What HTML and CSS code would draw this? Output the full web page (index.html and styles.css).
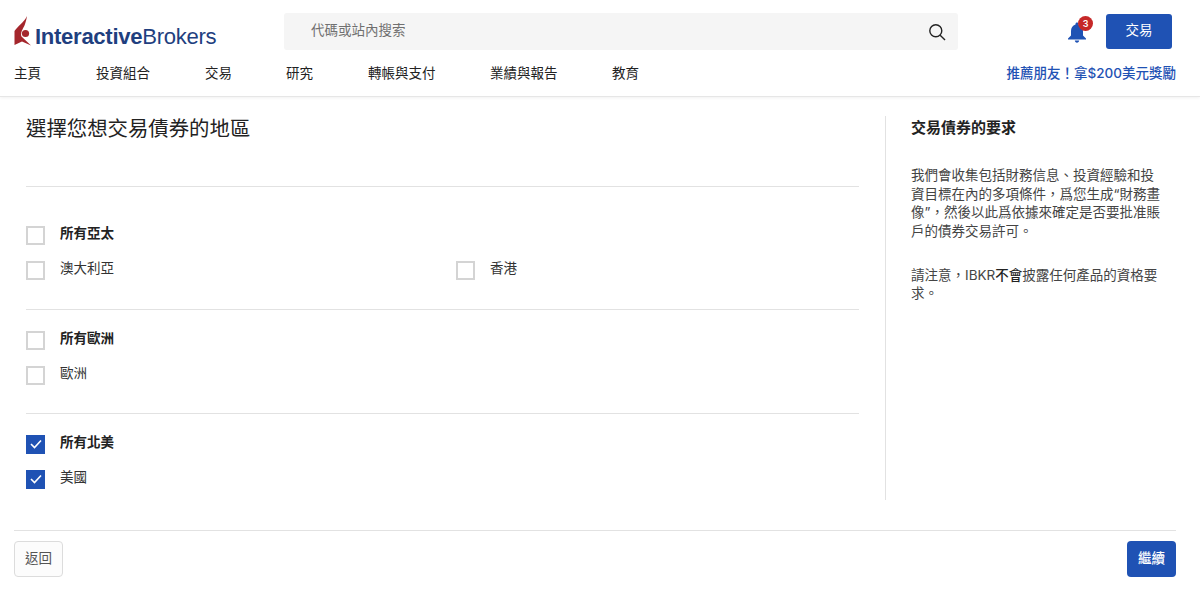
FILE: index.html
```html
<!DOCTYPE html>
<html lang="zh-Hant">
<head>
<meta charset="utf-8">
<title>選擇您想交易債券的地區</title>
<link rel="stylesheet" href="styles.css">
</head>
<body>
<header class="header">
  <div class="top-row">
    <a class="logo">
      <svg class="logo-mark" width="18" height="30" viewBox="0 0 18 30"><path fill="#a4262c" d="M13 0 C11 5 3 11 .5 15 V29 L8 25.500 L17 29.500 L7.500 20.500 C6 17 9 12.500 10.500 9.500 C11.800 6 12.600 3 13 0Z"/><circle cx="11.500" cy="17.500" r="3.600" fill="#a4262c"/></svg>
      <span class="logo-text"><b>Interactive</b>Brokers</span>
    </a>
    <div class="search"><span class="search-ph">代碼或站內搜索</span>
      <svg class="search-icon" width="18" height="18" viewBox="0 0 18 18" fill="none" stroke="#222" stroke-width="1.400"><circle cx="7.800" cy="7.800" r="6"/><path d="M12.200 12.200 L17 17"/></svg>
    </div>
    <div class="top-actions">
      <div class="bell">
        <svg width="20" height="22" viewBox="0 0 20 22"><path fill="#1f52b4" d="M10 1.500c-.9 0-1.500.6-1.500 1.500v.6C5.500 4.400 4 7 4 10v4.500L1 17.500v1h18v-1l-3-3V10c0-3-1.500-5.600-4.500-6.400V3c0-.9-.6-1.500-1.500-1.500zM7.800 19.500c0 1.200 1 2.200 2.200 2.200s2.200-1 2.200-2.200z"/></svg>
        <span class="badge">3</span>
      </div>
      <a class="btn btn-primary btn-trade">交易</a>
    </div>
  </div>
  <nav class="nav">
    <a class="nav-item w1">主頁</a>
    <a class="nav-item w2">投資組合</a>
    <a class="nav-item w3">交易</a>
    <a class="nav-item w4">研究</a>
    <a class="nav-item w5">轉帳與支付</a>
    <a class="nav-item w6">業績與報告</a>
    <a class="nav-item">教育</a>
    <a class="refer">推薦朋友！拿$200美元獎勵</a>
  </nav>
</header>
<main class="main">
  <section class="content">
    <h1 class="title">選擇您想交易債券的地區</h1>
    <div class="group first">
      <label class="row head"><span class="box"></span>所有亞太</label>
      <div class="two">
        <label class="row"><span class="box"></span>澳大利亞</label>
        <label class="row"><span class="box"></span>香港</label>
      </div>
    </div>
    <div class="group">
      <label class="row head"><span class="box"></span>所有歐洲</label>
      <label class="row"><span class="box"></span>歐洲</label>
    </div>
    <div class="group">
      <label class="row head"><span class="box on"><svg width="12" height="10" viewBox="0 0 12 10" fill="none" stroke="#fff" stroke-width="1.600"><path d="M1 5 L4.500 8.500 L11 1.500"/></svg></span>所有北美</label>
      <label class="row"><span class="box on"><svg width="12" height="10" viewBox="0 0 12 10" fill="none" stroke="#fff" stroke-width="1.600"><path d="M1 5 L4.500 8.500 L11 1.500"/></svg></span>美國</label>
    </div>
  </section>
  <aside class="side">
    <h2 class="side-title">交易債券的要求</h2>
    <p class="side-p">我們會收集包括財務信息、投資經驗和投資目標在內的多項條件，爲您生成“財務畫像”，然後以此爲依據來確定是否要批准賬戶的債券交易許可。</p>
    <p class="side-p">請注意，IBKR<b class="strong">不會</b>披露任何產品的資格要求。</p>
  </aside>
</main>
<footer class="footer">
  <a class="btn btn-back">返回</a>
  <a class="btn btn-primary btn-next">繼續</a>
</footer>
</body>
</html>
```
FILE: styles.css
```css
* { box-sizing: border-box; }
html, body { margin: 0; padding: 0; }
body {
  width: 1200px;
  height: 593px;
  overflow: hidden;
  background: #fff;
  color: #222;
  font-family: Inter, "Noto Sans CJK TC", "Noto Sans", sans-serif;
  font-size: 13.5px;
}
.header {
  height: 97px;
  padding: 13px 24px 0 14px;
  border-bottom: 1px solid #e6e6e6;
  box-shadow: 0 1px 3px rgba(0,0,0,.06);
}
.top-row { display: flex; align-items: center; height: 37px; }
.logo { display: flex; align-items: flex-start; width: 270px; height: 37px; padding-top: 3px; }
.logo-mark { display: block; margin-right: 3px; flex: none; }
.logo-text {
  font-family: "Liberation Sans", Arial, sans-serif;
  font-size: 22.100px;
  line-height: 26px;
  color: #1f3f7f;
  letter-spacing: -.3px;
  margin-top: 8px;
}
.logo-text b { font-weight: 700; }
.search {
  width: 674px;
  height: 37px;
  background: #f5f5f5;
  border-radius: 3px;
  display: flex;
  align-items: center;
  justify-content: space-between;
  padding: 0 12px 0 27px;
}
.search-ph { color: #707070; font-size: 13.5px; line-height: 20px; margin-top: -3px; }
.top-actions { display: flex; align-items: center; margin-left: auto; margin-right: 4px; }
.bell { position: relative; width: 20px; height: 22px; margin-right: 19px; }
.bell svg { display: block; }
.badge {
  position: absolute;
  top: -5px;
  left: 11px;
  width: 15px;
  height: 15px;
  border-radius: 50%;
  background: #c62828;
  color: #fff;
  font-size: 9px;
  font-weight: 600;
  line-height: 15px;
  text-align: center;
}
.btn {
  display: flex;
  align-items: center;
  justify-content: center;
  border-radius: 3px;
  font-size: 13.5px;
  line-height: 20px;
  padding-bottom: 3px;
}
.btn-primary { background: #1f52b4; color: #fff; }
.btn-trade { width: 66px; height: 35px; }
.nav { display: flex; align-items: center; height: 20px; margin-top: 13px; }
.nav-item { font-size: 13.5px; color: #222; line-height: 20px; }
.w1 { width: 82px; }
.w2 { width: 109px; }
.w3 { width: 81px; }
.w4 { width: 82px; }
.w5 { width: 122px; }
.w6 { width: 122px; }
.refer { margin-left: auto; color: #1f52b4; font-size: 13.5px; font-weight: 500; line-height: 20px; }
.main {
  display: flex;
  height: 414px;
  margin-top: 19px;
  padding: 0 14px 0 26px;
}
.content { width: 833px; }
.title {
  margin: 0 0 18px;
  height: 52px;
  font-size: 20.400px;
  line-height: 26px;
  font-weight: 400;
  color: #222;
}
.group { border-top: 1px solid #e2e2e2; padding: 18px 0 8px; height: 104px; }
.group.first { height: 123px; padding-top: 36px; }
.row { display: flex; align-items: center; height: 20px; color: #333; font-size: 13.5px; line-height: 20px; }
.row + .row, .group > .two { margin-top: 15px; }
.head { font-weight: 600; color: #222; }
.two { display: grid; grid-template-columns: 430px 1fr; }
.two .row { margin-top: 0; }
.box {
  width: 19px;
  height: 19px;
  border: 2px solid #d4d4d4;
  margin-right: 15px;
  margin-top: 4px;
  display: flex;
  align-items: center;
  justify-content: center;
  flex: none;
}
.box.on { background: #1f52b4; border-color: #1f52b4; }
.side {
  margin-left: 26px;
  width: 291px;
  height: 384px;
  border-left: 1px solid #e2e2e2;
  padding: 0 14px 0 25px;
}
.side-title { margin: 0 0 26px; font-size: 15px; line-height: 24px; font-weight: 700; color: #222; }
.side-p { margin: 0 0 25.500px; font-size: 13.5px; line-height: 18.600px; color: #444; }
.strong { font-weight: 500; color: #222; }
.footer {
  display: flex;
  justify-content: space-between;
  align-items: center;
  margin: 0 24px 0 14px;
  padding-top: 10px;
  border-top: 1px solid #e2e2e2;
}
.btn-back {
  width: 49px;
  height: 36px;
  border: 1px solid #dcdcdc;
  border-radius: 4px;
  color: #555;
  background: #fcfcfc;
}
.btn-next { width: 49px; height: 36px; font-weight: 500; border-radius: 4px; }
```
